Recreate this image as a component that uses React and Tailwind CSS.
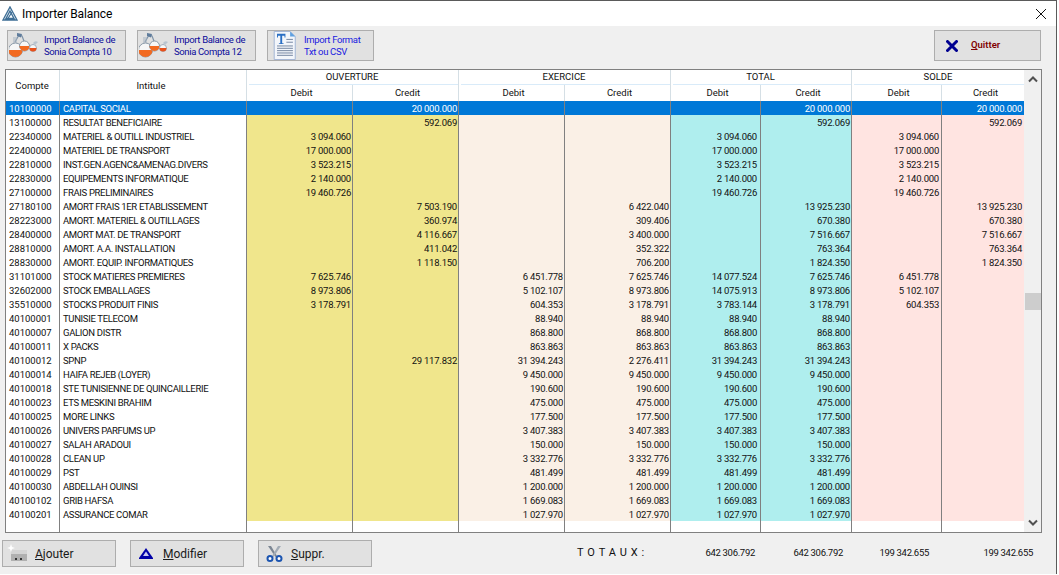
import React from "react";

const rows = [
  ["10100000","CAPITAL SOCIAL","","20 000.000","","","","20 000.000","","20 000.000"],
  ["13100000","RESULTAT BENEFICIAIRE","","592.069","","","","592.069","","592.069"],
  ["22340000","MATERIEL & OUTILL INDUSTRIEL","3 094.060","","","","3 094.060","","3 094.060",""],
  ["22400000","MATERIEL DE TRANSPORT","17 000.000","","","","17 000.000","","17 000.000",""],
  ["22810000","INST.GEN.AGENC&AMENAG.DIVERS","3 523.215","","","","3 523.215","","3 523.215",""],
  ["22830000","EQUIPEMENTS INFORMATIQUE","2 140.000","","","","2 140.000","","2 140.000",""],
  ["27100000","FRAIS PRELIMINAIRES","19 460.726","","","","19 460.726","","19 460.726",""],
  ["27180100","AMORT FRAIS 1ER ETABLISSEMENT","","7 503.190","","6 422.040","","13 925.230","","13 925.230"],
  ["28223000","AMORT. MATERIEL & OUTILLAGES","","360.974","","309.406","","670.380","","670.380"],
  ["28400000","AMORT MAT. DE TRANSPORT","","4 116.667","","3 400.000","","7 516.667","","7 516.667"],
  ["28810000","AMORT. A.A. INSTALLATION","","411.042","","352.322","","763.364","","763.364"],
  ["28830000","AMORT. EQUIP. INFORMATIQUES","","1 118.150","","706.200","","1 824.350","","1 824.350"],
  ["31101000","STOCK MATIERES PREMIERES","7 625.746","","6 451.778","7 625.746","14 077.524","7 625.746","6 451.778",""],
  ["32602000","STOCK EMBALLAGES","8 973.806","","5 102.107","8 973.806","14 075.913","8 973.806","5 102.107",""],
  ["35510000","STOCKS PRODUIT FINIS","3 178.791","","604.353","3 178.791","3 783.144","3 178.791","604.353",""],
  ["40100001","TUNISIE TELECOM","","","88.940","88.940","88.940","88.940","",""],
  ["40100007","GALION DISTR","","","868.800","868.800","868.800","868.800","",""],
  ["40100011","X PACKS","","","863.863","863.863","863.863","863.863","",""],
  ["40100012","SPNP","","29 117.832","31 394.243","2 276.411","31 394.243","31 394.243","",""],
  ["40100014","HAIFA REJEB (LOYER)","","","9 450.000","9 450.000","9 450.000","9 450.000","",""],
  ["40100018","STE TUNISIENNE DE QUINCAILLERIE","","","190.600","190.600","190.600","190.600","",""],
  ["40100023","ETS MESKINI BRAHIM","","","475.000","475.000","475.000","475.000","",""],
  ["40100025","MORE LINKS","","","177.500","177.500","177.500","177.500","",""],
  ["40100026","UNIVERS PARFUMS UP","","","3 407.383","3 407.383","3 407.383","3 407.383","",""],
  ["40100027","SALAH ARADOUI","","","150.000","150.000","150.000","150.000","",""],
  ["40100028","CLEAN UP","","","3 332.776","3 332.776","3 332.776","3 332.776","",""],
  ["40100029","PST","","","481.499","481.499","481.499","481.499","",""],
  ["40100030","ABDELLAH OUINSI","","","1 200.000","1 200.000","1 200.000","1 200.000","",""],
  ["40100102","GRIB HAFSA","","","1 669.083","1 669.083","1 669.083","1 669.083","",""],
  ["40100201","ASSURANCE COMAR","","","1 027.970","1 027.970","1 027.970","1 027.970","",""],
];

const GRID = "grid grid-cols-[54px_187px_106px_106px_106px_106px_90px_91px_90px_83px]";
const BODY_BG = [
  "bg-[#f0e68c]","bg-[#f0e68c]","bg-[#faf0e6]","bg-[#faf0e6]",
  "bg-[#afeeee]","bg-[#afeeee]","bg-[#ffe4e1]","bg-[#ffe4e1]",
];
const PAD = ["pr-[1px]","pr-[1px]","pr-[1px]","pr-[1px]","pr-[3px]","pr-[1px]","pr-[2px]","pr-[3px]"];
const LINE = "border-r border-[#808080]";
const HLINE = "border-r border-[#d5dfe5]";
const SUB = "h-[16px] leading-[15px] text-center pl-[4px]";

function Flasks() {
  return (
    <svg width="32" height="28" viewBox="0 0 32 28" className="shrink-0">
      <path d="M6 10 L10 3 L13 4 L15 9" fill="none" stroke="#7f93a8" strokeWidth="1.2" />
      <path d="M8 1 l5 1 l-1 3.500 l-4 -1.500z" fill="#5f7c9c" />
      <path d="M5 5 V11 M7 5 V11" stroke="#a6b3c0" strokeWidth="1" />
      <circle cx="6.500" cy="18" r="7" fill="#f7f7f7" stroke="#8a99a8" strokeWidth="1" />
      <path d="M-0.500 18 a7 7 0 0 0 14 0z" fill="#f26a21" />
      <circle cx="15.500" cy="14" r="5" fill="#f7f7f7" stroke="#8a99a8" strokeWidth="1" />
      <path d="M10.500 14 a5 5 0 0 0 10 0z" fill="#f26a21" />
      <circle cx="24" cy="16" r="3.500" fill="#f7f7f7" stroke="#a0adb9" strokeWidth="1" />
      <path d="M20.500 16 a3.500 3.500 0 0 0 7 0z" fill="#e8501a" />
      <path d="M24 11 q2 -3 5 -1 l-3 3z" fill="#b8c4cf" />
    </svg>
  );
}

function DocIcon() {
  return (
    <svg width="23" height="29" viewBox="0 0 24 31" className="shrink-0">
      <path d="M1 0.5 H18 L23.5 6 V30.5 H1z" fill="#f3f6fb" stroke="#9fb2d3" />
      <path d="M18 0.5 L23.5 6 H18z" fill="#5fa0e0" />
      <path d="M4 3 H13 V7 H12 V5 H9.5 V13 H11 V14 H6 V13 H7.5 V5 H5 V7 H4z" fill="#2a6fc4" />
      <path d="M14 9 H21 M14 12 H21 M4 16 H21 M4 18.500 H21 M4 21 H21 M4 23.500 H21 M4 26 H21" stroke="#6d7f9c" strokeWidth="1" />
    </svg>
  );
}

function AddIcon() {
  return (
    <svg width="21" height="19" viewBox="0 0 21 19" className="shrink-0">
      <rect x="4" y="6" width="16" height="11" fill="#b0b0b0" />
      <path d="M4 6 H20 V10 H4z" fill="#d4d4d4" />
      <path d="M8 14 h2 v2 h-2z M13 14 h2 v2 h-2z" fill="#333" />
      <path d="M4 0 L5 3 L8 4 L5 5 L4 8 L3 5 L0 4 L3 3z" fill="#ffffff" />
    </svg>
  );
}

function TriangleIcon() {
  return (
    <svg width="14" height="11" viewBox="0 0 14 11" className="shrink-0">
      <path d="M7 0 L14 10 V11 H0 V10z" fill="#0000a8" />
      <path d="M7 3.500 L10 8 H4z" fill="#c8c8f0" />
    </svg>
  );
}

function ScissorsIcon() {
  return (
    <svg width="17" height="16" viewBox="0 0 17 16" className="shrink-0">
      <path d="M2 0 L5 0 L11 10 L9.500 11z" fill="#7d8794" />
      <path d="M15 0 L12 0 L6 10 L7.500 11z" fill="#a3acb6" />
      <circle cx="4" cy="12.500" r="2.500" fill="#fff" stroke="#1c55b0" strokeWidth="2" />
      <circle cx="13" cy="12.500" r="2.500" fill="#fff" stroke="#1c55b0" strokeWidth="2" />
    </svg>
  );
}

function QuitIcon() {
  return (
    <svg width="12" height="12" viewBox="0 0 12 12" className="shrink-0">
      <path d="M1.500 1.500 L10.500 10.500 M10.500 1.500 L1.500 10.500" stroke="#000090" strokeWidth="3" strokeLinecap="round" />
    </svg>
  );
}

function AppLogo() {
  return (
    <svg width="16" height="15" viewBox="0 0 16 15" className="shrink-0">
      <path d="M8 1 L15 14 H1z M8 5 L12 12.500 H4z" fill="none" stroke="#3f6f96" strokeWidth="1.400" />
      <path d="M5 14 L10 6" stroke="#3f6f96" strokeWidth="1.200" />
    </svg>
  );
}

function TopButton({ icon, first, second, color, pad, gap }) {
  return (
    <button className={`h-[31px] border border-[#adadad] bg-[#e1e1e1] flex items-center text-left ${pad}`}>
      {icon}
      <span className={`block text-[9.5px] tracking-[-0.35px] leading-[12px] whitespace-nowrap ${gap} ${color}`}>
        {first}
        <br />
        {second}
      </span>
    </button>
  );
}

function BottomButton({ icon, letter, rest, iconBox }) {
  return (
    <button className="w-[114px] h-[27px] border border-[#adadad] bg-[#e1e1e1] flex items-center text-[12px] text-[#1a1a1a]">
      <span className={`flex items-center w-[32px] ${iconBox}`}>{icon}</span>
      <span className="whitespace-nowrap">
        <span className="underline">{letter}</span>
        {rest}
      </span>
    </button>
  );
}

function Row({ r, selected }) {
  const base = selected ? "bg-[#0078d7] text-white" : "text-[#111]";
  return (
    <div className={`${GRID} grid-rows-[14px] h-[14px] leading-[14px] text-[9.5px]`}>
      <div className={`${base} ${LINE} pl-[3px] pt-[1px] overflow-hidden whitespace-nowrap`}>{r[0]}</div>
      <div className={`${base} ${LINE} pl-[3px] pt-[1px] tracking-[-0.33px] whitespace-nowrap overflow-hidden`}>{r[1]}</div>
      {r.slice(2).map((v, i) => (
        <div
          key={i}
          className={`${selected ? "bg-[#0078d7] text-white" : `${BODY_BG[i]} text-[#111]`} ${i < 7 ? LINE : ""} ${PAD[i]} pt-[1px] overflow-hidden text-right tracking-[-0.22px] whitespace-nowrap`}
        >
          {v}
        </div>
      ))}
    </div>
  );
}

function Group({ label, span, line }) {
  return (
    <div className={`${span} ${line} h-[15px] pl-[2px]`}>
      <div className="h-[15px] leading-[14px] text-center pr-[3px] border-b border-[#d9ebf9]">{label}</div>
    </div>
  );
}

export default function App() {
  return (
    <div className="w-[1059px] h-[575px] bg-white overflow-hidden font-['Roboto','Noto_Sans',sans-serif]">
      <div className="w-[1057px] h-[574px] border-t border-r border-[#5a5a5a] bg-[#f0f0f0] flex flex-col">
        <div className="h-[25px] shrink-0 bg-white flex items-center pl-[2px] pr-[8px] text-[12px] text-black">
          <AppLogo />
          <span className="ml-[4px] tracking-[-0.1px]">Importer Balance</span>
          <svg width="12" height="12" viewBox="0 0 12 12" className="ml-auto mr-[1px]">
            <path d="M1 1 L11 11 M11 1 L1 11" stroke="#111" strokeWidth="1" />
          </svg>
        </div>

        <div className="h-[43px] shrink-0 flex items-start pt-[4px] pl-[7px] pr-[15px] gap-[11px]">
          <TopButton pad="w-[119px] pl-[1px]" gap="ml-[3px]" color="text-[#0a0a9a]" icon={<Flasks />} first="Import Balance de" second="Sonia Compta 10" />
          <TopButton pad="w-[119px] pl-[1px]" gap="ml-[3px]" color="text-[#0a0a9a]" icon={<Flasks />} first="Import Balance de" second="Sonia Compta 12" />
          <TopButton pad="w-[107px] pl-[5px]" gap="ml-[8px]" color="text-[#1a1ae0]" icon={<DocIcon />} first="Import Format" second="Txt ou CSV" />
          <button className="ml-auto w-[107px] h-[31px] border border-[#adadad] bg-[#e1e1e1] flex items-center pl-[11px] gap-[13px] text-[9.5px] font-semibold text-[#800000]">
            <QuitIcon />
            <span>
              <span className="underline">Q</span>uitter
            </span>
          </button>
        </div>

        <div className="ml-[5px] w-[1037px] h-[464px] shrink-0 border border-[#808080] bg-white flex">
          <div className="w-[1018px] shrink-0 flex flex-col">
            <div className={`${GRID} h-[31px] text-[9.5px] text-[#111] shrink-0`}>
              <div className={`row-span-2 ${HLINE} flex items-center justify-center pt-[2px] pr-[1px]`}>Compte</div>
              <div className={`row-span-2 ${HLINE} flex items-center justify-center pt-[2px] pr-[4px]`}>Intitule</div>
              <Group label="OUVERTURE" span="col-span-2" line={HLINE} />
              <Group label="EXERCICE" span="col-span-2" line={HLINE} />
              <Group label="TOTAL" span="col-span-2" line={HLINE} />
              <Group label="SOLDE" span="col-span-2" line="" />
              <div className={`${HLINE} ${SUB}`}>Debit</div>
              <div className={`${HLINE} ${SUB}`}>Credit</div>
              <div className={`${HLINE} ${SUB}`}>Debit</div>
              <div className={`${HLINE} ${SUB}`}>Credit</div>
              <div className={`${HLINE} ${SUB}`}>Debit</div>
              <div className={`${HLINE} ${SUB}`}>Credit</div>
              <div className={`${HLINE} ${SUB}`}>Debit</div>
              <div className={SUB}>Credit</div>
            </div>
            {rows.map((r, i) => (
              <Row key={r[0]} r={r} selected={i === 0} />
            ))}
            <div className={`${GRID} flex-1`}>
              {Array.from({ length: 9 }).map((_, i) => (
                <div key={i} className={LINE} />
              ))}
              <div />
            </div>
          </div>
          <div className="flex-1 bg-[#f0f0f0] flex flex-col items-center">
            <svg width="10" height="7" viewBox="0 0 10 7" className="mt-[6px]">
              <path d="M1 5.500 L5 1.500 L9 5.500" fill="none" stroke="#505050" strokeWidth="2" />
            </svg>
            <div className="mt-[210px] w-[16px] h-[17px] bg-[#cdcdcd]" />
            <svg width="10" height="7" viewBox="0 0 10 7" className="mt-auto mb-[6px]">
              <path d="M1 1.500 L5 5.500 L9 1.500" fill="none" stroke="#505050" strokeWidth="2" />
            </svg>
          </div>
        </div>

        <div className="flex-1 flex items-start pt-[7px] pl-[2px] gap-[14px]">
          <BottomButton iconBox="pl-[4px]" letter="A" rest="jouter" icon={<AddIcon />} />
          <BottomButton iconBox="pl-[8px]" letter="M" rest="odifier" icon={<TriangleIcon />} />
          <BottomButton iconBox="pl-[7px]" letter="S" rest="uppr." icon={<ScissorsIcon />} />
          <div className="flex items-center h-[27px] text-[9.5px] tracking-[-0.3px] text-[#111] whitespace-nowrap">
            <span className="ml-[191px] w-[70px] text-[11px] tracking-[3.9px] shrink-0">TOTAUX:</span>
            <span className="w-[108px] text-right">642 306.792</span>
            <span className="w-[88px] text-right">642 306.792</span>
            <span className="w-[86px] text-right">199 342.655</span>
            <span className="w-[104px] text-right">199 342.655</span>
          </div>
        </div>
      </div>
    </div>
  );
}
